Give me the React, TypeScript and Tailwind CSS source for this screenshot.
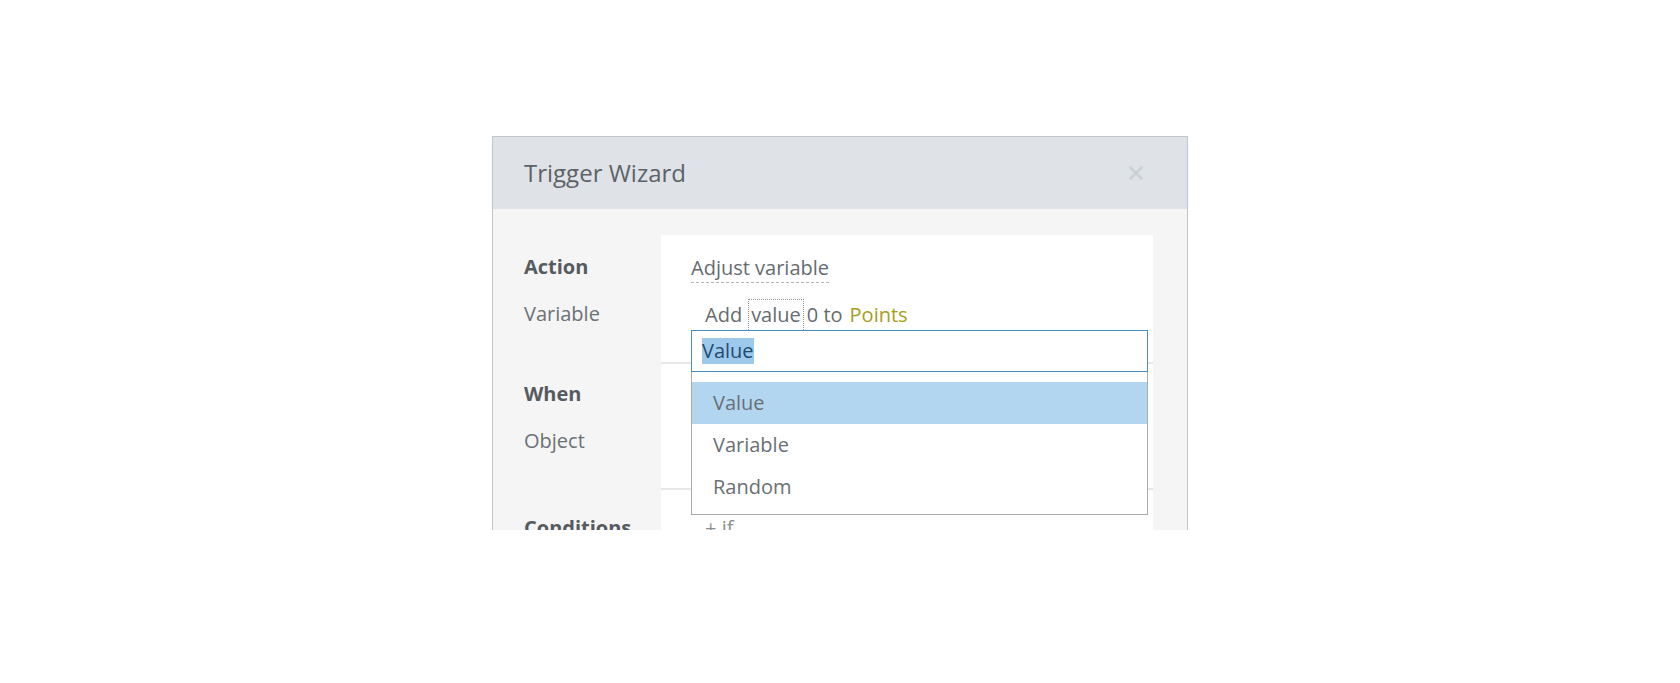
import { X } from "lucide-react";

const font = { fontFamily: '"Open Sans", "Noto Sans", sans-serif' };

function Label({ text, bold }: { text: string; bold?: boolean }) {
  return (
    <div className={`h-[28px] leading-[28px] text-[20px] ${bold ? "font-bold text-[#555b60]" : "text-[#6c7176]"}`}>
      {text}
    </div>
  );
}

export default function App() {
  return (
    <div className="min-h-[683px] w-full bg-white flex justify-center pt-[136px]" style={font}>
      <div className="w-[696px] h-[394px] overflow-hidden border border-b-0 border-[#c3c6c9] bg-[#f5f5f5] flex flex-col">
        {/* header */}
        <div className="h-[72px] shrink-0 bg-[#dfe3e7] flex items-center justify-between pl-[31px] pr-[40px]">
          <h2 className="text-[24px] text-[#5d6266] leading-none">Trigger Wizard</h2>
          <X className="h-[22px] w-[22px] text-[#ccd1d5]" strokeWidth={3} />
        </div>

        {/* body */}
        <div className="pt-[26px] flex flex-col">
          {/* action */}
          <div className="flex">
            <div className="w-[168px] shrink-0 pl-[31px] pt-[18px] flex flex-col gap-[19px]">
              <Label text="Action" bold />
              <Label text="Variable" />
            </div>
            <div className="relative w-[492px] h-[129px] bg-white border-b-2 border-[#e7e7e7] pl-[30px] pt-[19px]">
              <div className="h-[28px] leading-[28px] text-[20px] text-[#666b70]">
                <span className="border-b border-dashed border-[#b5b5b5] pb-[1px]">Adjust variable</span>
              </div>
              <div className="mt-[19px] pl-[14px] h-[28px] leading-[28px] text-[20px] text-[#666b70] flex">
                <span>Add</span>
                <span className="relative ml-[6px] px-[3px]">
                  value
                  <span className="absolute left-0 right-0 top-[-2px] h-[35px] border border-dotted border-[#8f8f8f]" />
                </span>
                <span className="ml-[3px]">0 to</span>
                <span className="ml-[7px] text-[#a69d1c]">Points</span>
              </div>

              {/* inline editor */}
              <div className="absolute left-[30px] right-[5px] top-[95px] z-10">
                <div className="h-[42px] border border-[#4b8fc2] bg-white flex items-center pl-[10px]">
                  <span className="text-[20px] leading-[26px] bg-[#9dc9ec] text-[#1f4b70]">Value</span>
                </div>
                <div className="border border-t-0 border-[#a9acaf] bg-white pt-[10px] pb-[6px] text-[20px] text-[#6a6f74]">
                  <div className="h-[42px] flex items-center pl-[21px] bg-[#b2d6f0]">Value</div>
                  <div className="h-[42px] flex items-center pl-[21px]">Variable</div>
                  <div className="h-[42px] flex items-center pl-[21px]">Random</div>
                </div>
              </div>
            </div>
          </div>

          {/* when */}
          <div className="flex">
            <div className="w-[168px] shrink-0 pl-[31px] pt-[16px] flex flex-col gap-[19px]">
              <Label text="When" bold />
              <Label text="Object" />
            </div>
            <div className="w-[492px] h-[126px] bg-white border-b-2 border-[#e7e7e7]" />
          </div>

          {/* conditions */}
          <div className="flex">
            <div className="w-[168px] shrink-0 pl-[31px] pt-[24px]">
              <Label text="Conditions" bold />
            </div>
            <div className="w-[492px] h-[80px] bg-white pl-[44px] pt-[24px]">
              <div className="h-[28px] leading-[28px] text-[20px] text-[#8a8f93]">+ if</div>
            </div>
          </div>
        </div>
      </div>
    </div>
  );
}
